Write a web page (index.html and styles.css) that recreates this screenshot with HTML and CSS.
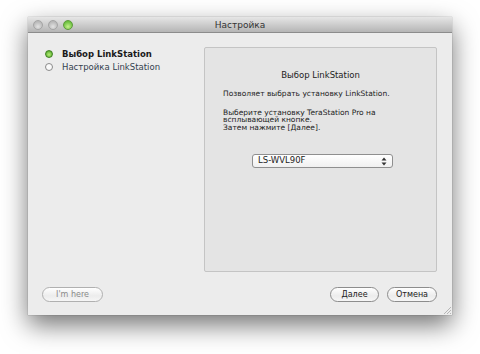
FILE: index.html
```html
<!DOCTYPE html>
<html lang="ru">
<head>
    <meta charset="UTF-8">
    <title>Настройка</title>
    <link rel="stylesheet" href="styles.css">
</head>
<body>
    <div class="window">
        <div class="titlebar">
            <div class="lights">
                <span class="light"></span>
                <span class="light"></span>
                <span class="light green"></span>
            </div>
            <div class="title">Настройка</div>
        </div>
        <div class="content">
            <div class="main">
                <ul class="steps">
                    <li class="step current"><span class="dot"></span>Выбор LinkStation</li>
                    <li class="step"><span class="dot"></span>Настройка LinkStation</li>
                </ul>
                <div class="panel">
                    <h3>Выбор LinkStation</h3>
                    <p>Позволяет выбрать установку LinkStation.</p>
                    <p>Выберите установку TeraStation Pro на<br>всплывающей кнопке.<br>Затем нажмите [Далее].</p>
                    <div class="popup">
                        <span>LS-WVL90F</span>
                        <svg width="6" height="9" viewBox="0 0 6 9">
                            <path d="M3 0.5 L5.5 3.5 H0.5 Z" fill="#333"/>
                            <path d="M3 8.5 L5.5 5.5 H0.5 Z" fill="#333"/>
                        </svg>
                    </div>
                </div>
            </div>
            <div class="buttons">
                <button class="btn" disabled>I'm here</button>
                <div class="right">
                    <button class="btn">Далее</button>
                    <button class="btn">Отмена</button>
                </div>
            </div>
            <svg class="grip" width="8" height="8" viewBox="0 0 8 8">
                <path d="M8 1 L1 8 M8 4 L4 8 M8 7 L7 8" stroke="#a8a8a8" stroke-width="0.8"/>
            </svg>
        </div>
    </div>
</body>
</html>
```

FILE: styles.css
```css
html, body {
    height: 100%;
}
body {
    margin: 0;
    padding-top: 17px;
    box-sizing: border-box;
    background: #ffffff;
    font-family: "DejaVu Sans", sans-serif;
    color: #222;
}
.window {
    margin-left: 28px;
    width: 424px;
    height: 298px;
    background: #ececec;
    box-shadow: 0 10px 24px rgba(0, 0, 0, 0.55), 0 0 1px rgba(0, 0, 0, 0.4);
    display: flex;
    flex-direction: column;
}
.titlebar {
    height: 15px;
    border-bottom: 1px solid #8c8c8c;
    background: linear-gradient(#e6e6e6, #b5b5b5);
    display: flex;
    align-items: center;
    position: relative;
}
.lights {
    display: flex;
    gap: 5px;
    padding-left: 5px;
}
.light {
    width: 10px;
    height: 10px;
    border-radius: 50%;
    box-sizing: border-box;
    border: 1px solid #a5a5a5;
    background: radial-gradient(circle at 50% 70%, #e2e2e2, #b9b9b9 70%);
}
.light.green {
    border-color: #5e9a3c;
    background: radial-gradient(circle at 50% 70%, #c6f18c, #6cc040 70%);
}
.title {
    position: absolute;
    left: 0;
    right: 0;
    text-align: center;
    font-size: 9px;
    color: #333;
}
.content {
    flex: 1;
    display: flex;
    flex-direction: column;
    position: relative;
}
.main {
    display: flex;
    padding: 14px 15px 0 17px;
    height: 225px;
}
.steps {
    list-style: none;
    margin: 0;
    padding: 0;
    width: 159px;
    font-size: 8.5px;
}
.step {
    display: flex;
    align-items: center;
    height: 13px;
    color: #33414f;
}
.step.current {
    font-weight: bold;
    color: #1a1a1a;
}
.dot {
    width: 8px;
    height: 8px;
    box-sizing: border-box;
    border-radius: 50%;
    border: 1.5px solid #8a8a8a;
    background: #fafafa;
    margin-right: 9px;
}
.current .dot {
    border-color: #3f7f22;
    background: radial-gradient(circle at 50% 60%, #b6ec78, #5fb332 75%);
}
.panel {
    flex: 1;
    background: #e4e4e4;
    border: 1px solid #c4c4c4;
    border-radius: 2px;
    padding: 21px 18px 0;
    font-size: 7.5px;
    line-height: 7.5px;
    color: #222;
}
.panel h3 {
    margin: 0 0 9px;
    font-size: 8.5px;
    font-weight: normal;
    text-align: center;
    line-height: 12px;
}
.panel p {
    margin: 0 0 11px;
}
.popup {
    margin: 23px 0 0 29px;
    width: 141px;
    height: 14px;
    box-sizing: border-box;
    border: 1px solid #8f8f8f;
    border-radius: 3px;
    background: linear-gradient(#ffffff, #f0f0f0);
    display: flex;
    align-items: center;
    justify-content: space-between;
    padding: 0 5px 0 5px;
    font-size: 8.5px;
}
.buttons {
    display: flex;
    justify-content: space-between;
    padding: 15px 15px 0 14px;
}
.right {
    display: flex;
    gap: 8px;
}
.btn {
    height: 15px;
    padding: 0;
    border: 1px solid #8d8d8d;
    border-radius: 8px;
    background: linear-gradient(#ffffff, #ececec 60%, #f6f6f6);
    font-family: "DejaVu Sans", sans-serif;
    font-size: 8px;
    color: #222;
    width: 49px;
}
.right .btn:last-child {
    width: 50px;
}
.btn[disabled] {
    width: 61px;
    color: #8a8a8a;
    border-color: #b0b0b0;
}
.grip {
    position: absolute;
    right: 1px;
    bottom: 1px;
}
```
